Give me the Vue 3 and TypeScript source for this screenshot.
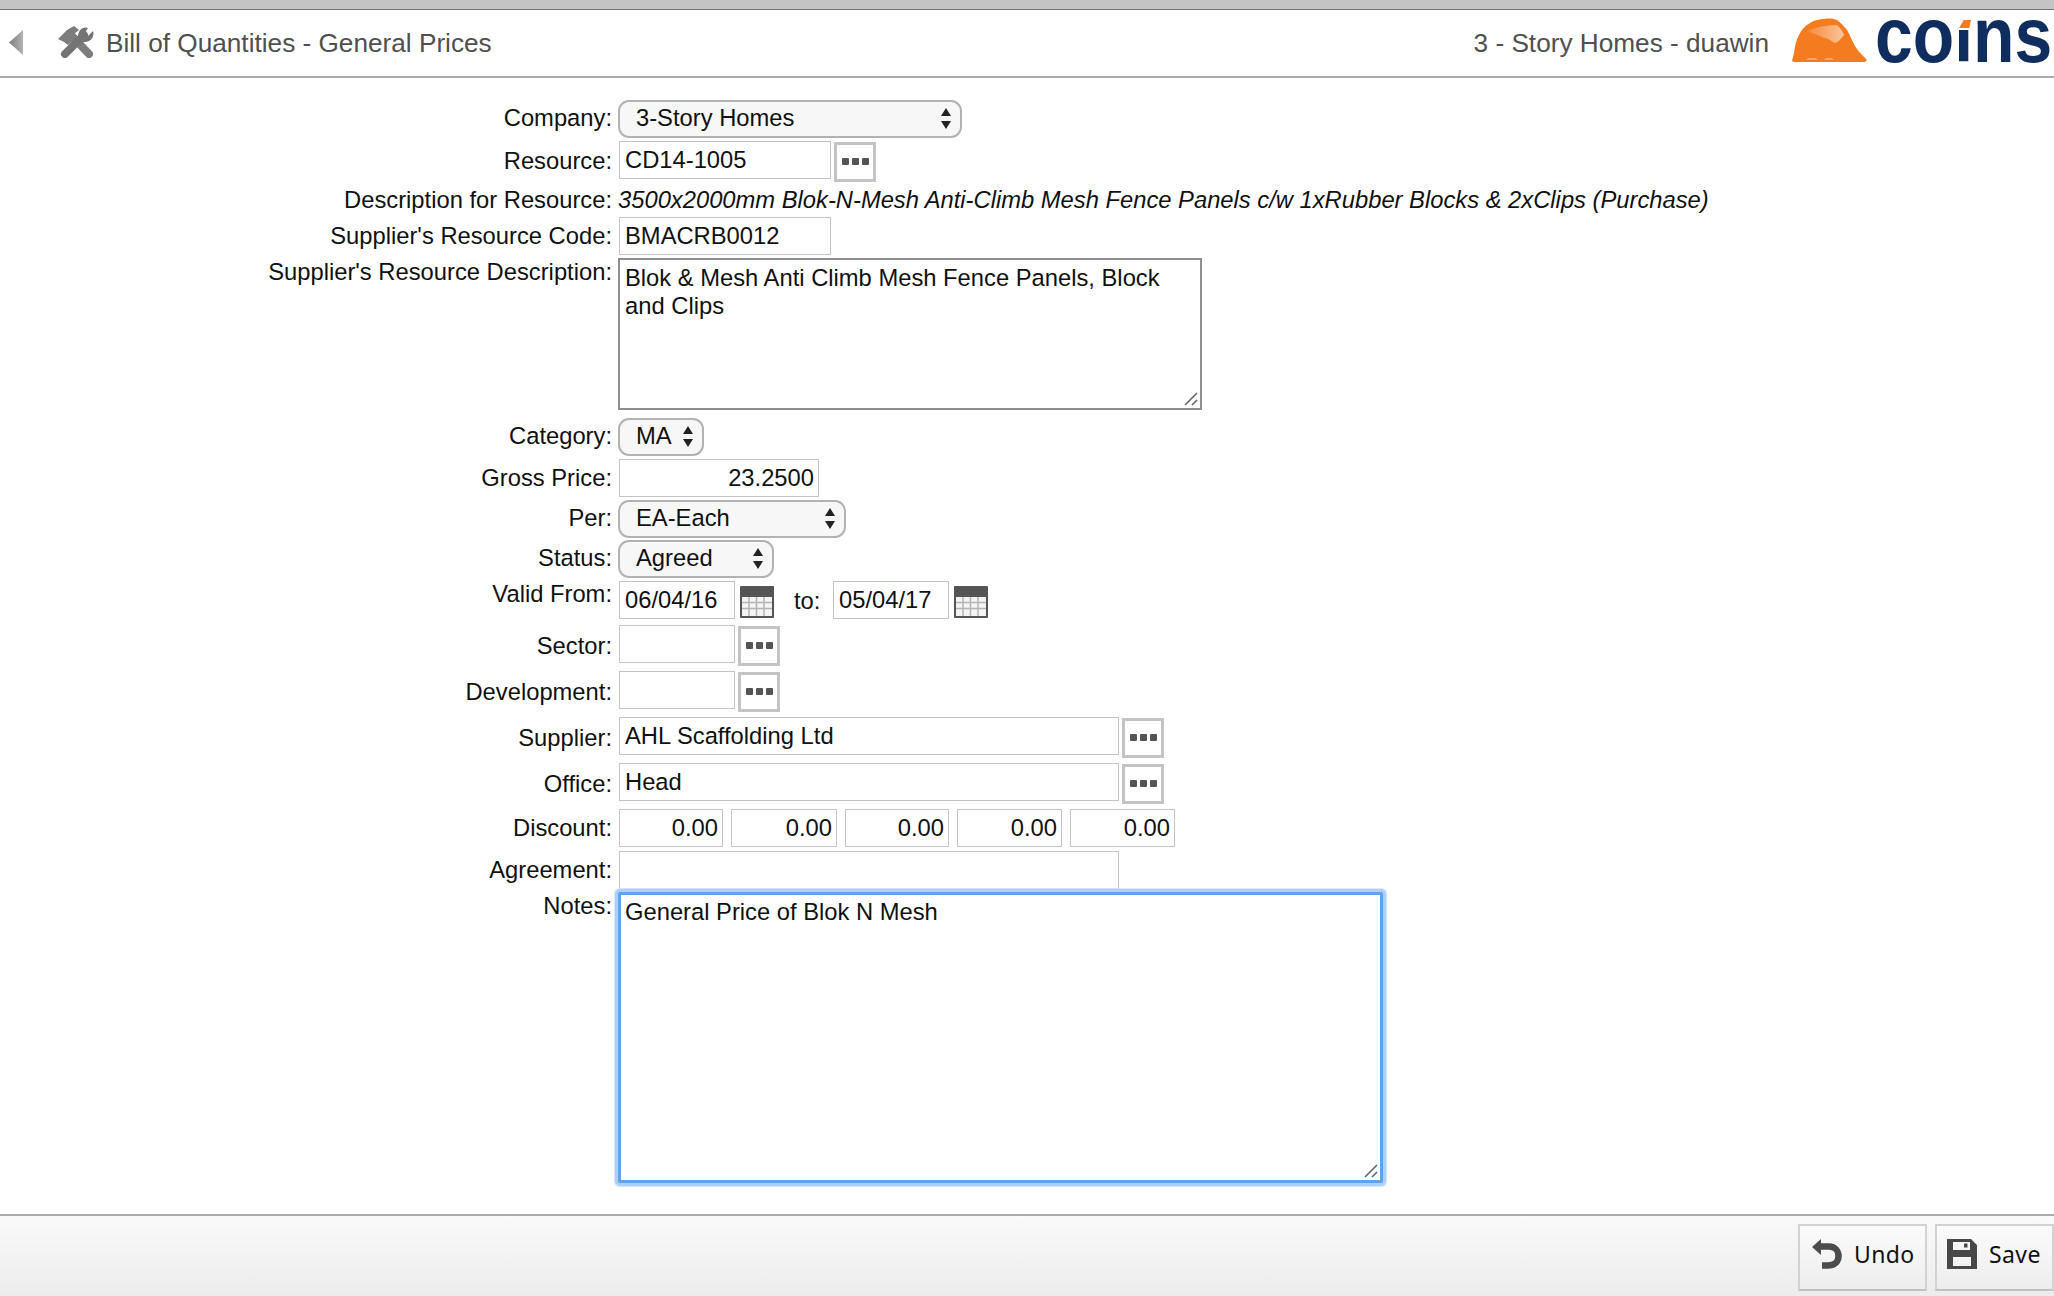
<script setup lang="ts">
const discounts: string[] = ['0.00', '0.00', '0.00', '0.00', '0.00']
const discountWidths: number[] = [104, 106, 104, 105, 105]
</script>

<template>
  <div class="page">
    <div class="topstrip"></div>
    <header class="head">
      <svg class="back" viewBox="0 0 14 25" width="14" height="25">
        <defs><linearGradient id="bk" x1="0" x2="1" y1="0" y2="0"><stop offset="0" stop-color="#7c7c7c" /><stop offset="1" stop-color="#b4b4b4" /></linearGradient></defs>
        <path d="M14 0 L14 25 L0 12.5 Z" fill="url(#bk)" />
      </svg>
      <svg class="tools" viewBox="0 0 36 34" width="36" height="34">
        <path d="M14 10 L31 28" fill="none" stroke="#7d7d7d" stroke-width="8" stroke-linecap="round" />
        <path d="M0 13 L9 4 L16 0 L21 4 L16 8 L18 12 L10 19 L6 16 Z" fill="#7d7d7d" />
        <path d="M26 9 L7 28" fill="none" stroke="#747474" stroke-width="8" stroke-linecap="round" />
        <path d="M35 5 L30 10 L26 8 L30 2 C25 0 20 4 20 11 L24 16 C32 17 37 11 35 5 Z" fill="#747474" />
      </svg>
      <span class="title">Bill of Quantities - General Prices</span>
      <span class="who">3 - Story Homes - duawin</span>
      <svg class="helmet" viewBox="0 0 75 44" width="75" height="44">
        <defs><linearGradient id="hl" x1="0" x2="1" y1="0" y2="0"><stop offset="0" stop-color="#f58a3c" /><stop offset="1" stop-color="#fbc49a" /></linearGradient></defs>
        <path d="M0 43 L2 35 C3 28 4 22 7 17 C10 11 13 8 18 5 C23 2 27 1 32 1 C38 0 42 1 45 2 C49 5 52 8 55 12 C58 17 60 23 63 28 C66 33 71 38 75 42 L73 44 L2 44 Z" fill="#f47b20" />
        <path d="M15 13 C24 9 34 7 45 7 C48 10 51 13 52 17 C49 21 46 24 43 25 C39 23 36 20 32 20 C27 18 21 15 15 13 Z" fill="url(#hl)" />
        <path d="M14 42 H26 L24 40 H16 Z M32 42 H42 L40 40 H34 Z" fill="#f9a668" />
      </svg>
      <div class="coins"><span class="word">coins</span><i class="dot"><i class="chip"></i></i></div>
    </header>

    <main class="form">
      <div class="row r-sel">
        <label>Company:</label>
        <div class="sel w-company">3-Story Homes<span class="arrows"></span></div>
      </div>
      <div class="row r-in l-40">
        <label>Resource:</label>
        <div class="inp w-res">CD14-1005</div>
        <button class="dots" type="button"><b></b><b></b><b></b></button>
      </div>
      <div class="row r-text">
        <label>Description for Resource:</label>
        <em class="desc">3500x2000mm Blok-N-Mesh Anti-Climb Mesh Fence Panels c/w 1xRubber Blocks &amp; 2xClips (Purchase)</em>
      </div>
      <div class="row r-in r-code l-38">
        <label>Supplier's Resource Code:</label>
        <div class="inp w-res">BMACRB0012</div>
      </div>
      <div class="row r-area l-27">
        <label>Supplier's Resource Description:</label>
        <div class="area">Blok &amp; Mesh Anti Climb Mesh Fence Panels, Block and Clips<svg class="grip" viewBox="0 0 14 14" width="14" height="14"><path d="M1 13 L13 1 M8 13 L13 8" stroke="#666" stroke-width="1.6" /></svg></div>
      </div>
      <div class="row r-sel r-cat">
        <label>Category:</label>
        <div class="sel w-cat">MA<span class="arrows"></span></div>
      </div>
      <div class="row r-in r-gross l-38">
        <label>Gross Price:</label>
        <div class="inp num w-gross">23.2500</div>
      </div>
      <div class="row r-sel r-per">
        <label>Per:</label>
        <div class="sel w-per">EA-Each<span class="arrows"></span></div>
      </div>
      <div class="row r-sel r-status">
        <label>Status:</label>
        <div class="sel w-status">Agreed<span class="arrows"></span></div>
      </div>
      <div class="row r-in r-valid l-26">
        <label>Valid From:</label>
        <div class="inp w-date">06/04/16</div>
        <svg class="cal" viewBox="0 0 34 32" width="34" height="32">
          <rect width="34" height="32" rx="1" fill="#555" />
          <rect x="2" y="11" width="30" height="19" fill="#f4f4f4" />
          <path d="M2 16.5 H32 M2 22.5 H32 M9 11 V30 M16.5 11 V30 M24 11 V30" stroke="#b4b4b4" stroke-width="1.5" />
        </svg>
        <span class="to">to:</span>
        <div class="inp w-date">05/04/17</div>
        <svg class="cal" viewBox="0 0 34 32" width="34" height="32">
          <rect width="34" height="32" rx="1" fill="#555" />
          <rect x="2" y="11" width="30" height="19" fill="#f4f4f4" />
          <path d="M2 16.5 H32 M2 22.5 H32 M9 11 V30 M16.5 11 V30 M24 11 V30" stroke="#b4b4b4" stroke-width="1.5" />
        </svg>
      </div>
      <div class="row r-in r-sector l-42">
        <label>Sector:</label>
        <div class="inp w-date"></div>
        <button class="dots" type="button"><b></b><b></b><b></b></button>
      </div>
      <div class="row r-in r-dev l-42">
        <label>Development:</label>
        <div class="inp w-date"></div>
        <button class="dots" type="button"><b></b><b></b><b></b></button>
      </div>
      <div class="row r-in r-sup l-41">
        <label>Supplier:</label>
        <div class="inp w-long">AHL Scaffolding Ltd</div>
        <button class="dots" type="button"><b></b><b></b><b></b></button>
      </div>
      <div class="row r-in r-off l-41">
        <label>Office:</label>
        <div class="inp w-long">Head</div>
        <button class="dots" type="button"><b></b><b></b><b></b></button>
      </div>
      <div class="row r-in r-disc l-38">
        <label>Discount:</label>
        <div class="disc">
          <div v-for="(d, i) in discounts" :key="i" class="inp num" :style="{ width: discountWidths[i] + 'px' }">{{ d }}</div>
        </div>
      </div>
      <div class="row r-in r-agree l-38">
        <label>Agreement:</label>
        <div class="inp w-long"></div>
      </div>
      <div class="row r-notes l-28">
        <label>Notes:</label>
        <div class="notes">General Price of Blok N Mesh<svg class="grip" viewBox="0 0 14 14" width="14" height="14"><path d="M1 13 L13 1 M8 13 L13 8" stroke="#666" stroke-width="1.6" /></svg></div>
      </div>
    </main>

    <footer class="foot">
      <button class="act undo" type="button">
        <svg viewBox="0 0 30 30" width="30" height="30">
          <path d="M8 7.5 H17 C23 7.5 26.5 12 26.5 17 C26.5 23 22 26.5 16 26.5 H10" fill="none" stroke="#4c4c4c" stroke-width="6.5" />
          <path d="M0 8 L9 0 L9 16 Z" fill="#4c4c4c" />
        </svg>
        <span>Undo</span>
      </button>
      <button class="act save" type="button">
        <svg viewBox="0 0 30 30" width="30" height="30"><path fill-rule="evenodd" d="M0 0 H24 L30 6 V30 H0 Z M6 3 V11 H23 V3 Z M17 4.5 H20.5 V8.5 H17 Z M6 18 V27 H24 V18 Z" fill="#484848" /></svg>
        <span>Save</span>
      </button>
    </footer>
  </div>
</template>

<style>
html, body { margin: 0; background: #fff; overflow: hidden; }
</style>

<style scoped>
.page {
  width: 2054px;
  height: 1296px;
  display: flex;
  flex-direction: column;
  overflow: hidden;
  font-family: "Liberation Sans", Arial, sans-serif;
  font-size: 23.75px;
  color: #111;
}
.topstrip { height: 9px; background: #c4c4c4; border-bottom: 1px solid #777; flex: none; }
.head {
  height: 66px;
  flex: none;
  border-bottom: 2px solid #aaa;
  display: flex;
  align-items: center;
  position: relative;
  color: #505050;
  font-size: 26.2px;
}
.back { margin-left: 9px; margin-top: -2px; flex: none; }
.tools { margin-left: 35px; flex: none; filter: blur(0.5px); }
.title { margin-left: 12px; }
.who { margin-left: auto; margin-right: 23px; }
.helmet { flex: none; margin-top: -6px; }
.coins {
  position: relative;
  flex: none;
  align-self: flex-start;
  width: 179px;
  margin-left: 8px;
  height: 66px;
  color: #0f2d5e;
}
.word {
  display: inline-block;
  font-weight: 700;
  font-size: 78px;
  line-height: 50px;
  transform: scaleX(0.87);
  transform-origin: 0 0;
}
.dot {
  position: absolute;
  left: 80px;
  top: -10px;
  width: 20px;
  height: 30px;
  background: linear-gradient(#c4c4c4 0 9px, #777 9px 10px, #fff 10px);
}
.chip { position: absolute; left: 4px; top: 20px; width: 12px; height: 8px; background: #f47b20; clip-path: polygon(40% 0, 100% 0, 85% 100%, 0 100%); }
.form { flex: 1; padding-top: 22px; display: flex; flex-direction: column; }
.row { display: flex; align-items: flex-start; flex: none; }
.row label { width: 612px; text-align: right; flex: none; box-sizing: border-box; line-height: 36px; }
.l-26 label { line-height: 26px; }
.l-27 label { line-height: 27px; }
.l-28 label { line-height: 28px; }
.l-38 label { line-height: 38px; }
.l-40 label { line-height: 40px; }
.l-41 label { line-height: 41px; }
.l-42 label { line-height: 42px; }
.sel, .inp, .area, .notes { box-sizing: border-box; line-height: 35px; }
.sel {
  position: relative;
  height: 38px;
  margin-left: 6px;
  padding-left: 16px;
  border: 2px solid #b2b2b2;
  border-radius: 11px;
  background: #f7f7f7;
  line-height: 31px;
}
.arrows { position: absolute; right: 9px; top: 6px; width: 0; height: 0; border-left: 5.5px solid transparent; border-right: 5.5px solid transparent; border-bottom: 8px solid #222; }
.arrows::after { content: ""; position: absolute; left: -5.5px; top: 13px; width: 0; height: 0; border-left: 5.5px solid transparent; border-right: 5.5px solid transparent; border-top: 8px solid #222; }
.inp {
  height: 38px;
  margin-left: 7px;
  padding: 0 4px 0 5px;
  border: 1px solid #c4c4c4;
  background: #fff;
  white-space: nowrap;
  overflow: hidden;
}
.num { text-align: right; }
.w-company { width: 344px; }
.w-res { width: 212px; }
.w-cat { width: 86px; }
.w-gross { width: 200px; }
.w-per { width: 228px; }
.w-status { width: 156px; }
.w-date { width: 116px; }
.w-long { width: 500px; }
.dots {
  width: 42px;
  height: 40px;
  margin: 1px 0 0 3px;
  padding: 0 0 2px;
  box-sizing: border-box;
  border: 3px solid #c4c4c4;
  background: #fff;
  display: flex;
  align-items: center;
  justify-content: center;
  gap: 3px;
}
.dots b { width: 7px; height: 7px; background: #555; border-radius: 1px; display: block; }
.r-sel { height: 41px; }
.r-in { height: 42px; }
.r-text { height: 34px; }
.r-text label { line-height: 34px; }
.desc { margin-left: 6px; line-height: 34px; white-space: nowrap; font-style: italic; }
.area {
  position: relative;
  width: 584px;
  height: 152px;
  margin-left: 6px;
  padding: 4px 5px;
  border: 2px solid #8e8e8e;
  line-height: 28px;
  background: #fff;
}
.grip { position: absolute; right: 2px; bottom: 2px; }
.r-code { height: 41px; }
.r-area { height: 160px; }
.r-cat { height: 41px; }
.r-gross { height: 41px; }
.r-per { height: 40px; }
.r-status { height: 41px; }
.r-valid { height: 44px; }
.r-sector { height: 46px; }
.r-dev { height: 46px; }
.r-sup { height: 46px; }
.r-off { height: 46px; }
.r-disc { height: 42px; }
.r-agree { height: 41px; }
.cal { margin: 5px 0 0 5px; flex: none; }
.to { margin: 0 0 0 20px; line-height: 40px; width: 32px; }
.disc { display: flex; gap: 8px; margin-left: 7px; }
.disc .inp { margin-left: 0; }
.notes {
  position: relative;
  width: 765px;
  height: 291px;
  margin-left: 6px;
  padding: 3px 4px;
  border: 3px solid #5fa3ee;
  border-radius: 2px;
  box-shadow: 0 0 0 3px #acd0f6, 0 0 1px 4px #d4e6fa;
  line-height: 28px;
  background: #fff;
}
.r-notes { height: 291px; }
.foot {
  height: 82px;
  flex: none;
  border-top: 2px solid #aaa;
  background: linear-gradient(#fafafa, #ececec);
  display: flex;
  justify-content: flex-end;
  gap: 8px;
  padding-top: 8px;
  box-sizing: border-box;
}
.act {
  height: 67px;
  box-sizing: border-box;
  border: 2px solid #d2d2d2;
  border-bottom-color: #c0c0c0;
  background: linear-gradient(#fbfbfb, #ededed);
  font-family: "Noto Sans", sans-serif;
  font-size: 23px;
  letter-spacing: 0.4px;
  color: #111;
  display: flex;
  align-items: center;
  padding: 0 0 8px 12px;
}
.undo { width: 129px; gap: 12px; }
.save { width: 119px; gap: 12px; padding-left: 10px; }
.act svg { flex: none; }
</style>
